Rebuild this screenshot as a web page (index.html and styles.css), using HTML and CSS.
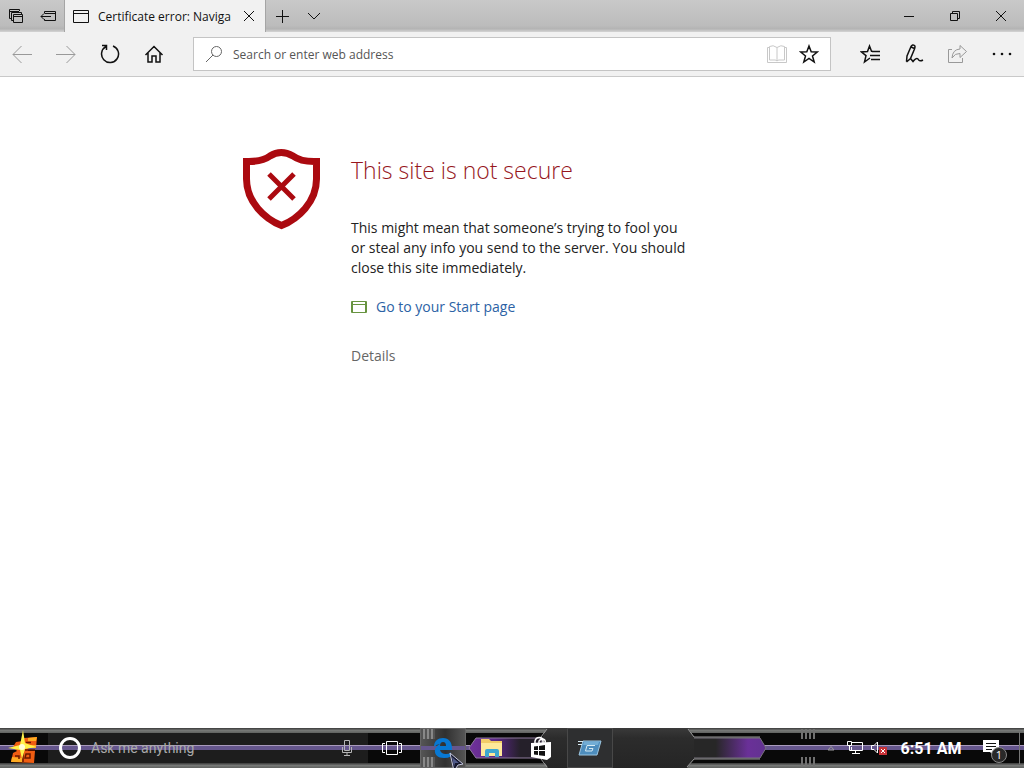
FILE: index.html
```html
<!DOCTYPE html>
<html lang="en">
<head>
	<meta charset="utf-8">
	<title>Certificate error: Navigation blocked</title>
	<link rel="stylesheet" href="styles.css">
</head>
<body>

<header class="tabs">
	<button class="tab-tool" aria-label="Tabs you've set aside">
		<svg width="16" height="16" viewBox="0 0 16 16"><path d="M3 10.500H1.500V1.500H11.500V3M1.500 3.500H11M5 12.500H3.500V4.500H13.500V6M5.500 6.500H14.500V14.500H5.500ZM5.500 8.500H14"/></svg>
	</button>
	<button class="tab-tool" aria-label="Set these tabs aside">
		<svg width="16" height="16" viewBox="0 0 16 16"><path d="M4.500 5V3.500H15.500V12.500H4.500V11M4.500 5.500H15.500M11 8.500H1M4 5.500L1 8.500L4 11.500"/></svg>
	</button>
	<div class="tab">
		<svg width="16" height="14" viewBox="0 0 16 14"><path d="M.5 1.500H15.500V13.500H.5ZM.5 4.500H15.500"/></svg>
		<span class="tab-title">Certificate error: Naviga</span>
		<button class="tab-close" aria-label="Close tab">
			<svg width="10" height="10" viewBox="0 0 10 10"><path d="M0 0L10 10M10 0L0 10"/></svg>
		</button>
	</div>
	<button class="tab-tool" aria-label="New tab">
		<svg width="14" height="14" viewBox="0 0 14 14"><path d="M7.500 1V14M1 7.500H14"/></svg>
	</button>
	<button class="tab-tool" aria-label="Show tab previews">
		<svg width="14" height="8" viewBox="0 0 14 8"><path d="M1 1L7 7L13 1"/></svg>
	</button>
	<div class="window-buttons">
		<button aria-label="Minimize"><svg width="10" height="10" viewBox="0 0 10 10"><path d="M0 5.500H10"/></svg></button>
		<button aria-label="Restore"><svg width="10" height="10" viewBox="0 0 10 10"><path d="M.5 2.500H7.500V9.500H.5ZM2.500 2V.5H9.500V7.500H8"/></svg></button>
		<button aria-label="Close"><svg width="12" height="12" viewBox="0 0 12 12"><path d="M1 1L11 11M11 1L1 11"/></svg></button>
	</div>
</header>

<nav class="toolbar">
	<button class="dim" aria-label="Back"><svg width="20" height="18" viewBox="0 0 20 18"><path d="M20 9.500H1M9.500 1L1 9.500L9.500 18"/></svg></button>
	<button class="dim" aria-label="Forward"><svg width="20" height="18" viewBox="0 0 20 18"><path d="M0 9.500H19M10.500 1L19 9.500L10.500 18"/></svg></button>
	<button aria-label="Refresh"><svg width="20" height="20" viewBox="0 0 20 20"><path class="bold" d="M13 2A8.500 8.500 0 1 1 6 2.500M2 1.500H6.500V6"/></svg></button>
	<button aria-label="Home"><svg width="20" height="20" viewBox="0 0 20 20"><path class="bold" d="M1.500 11L10 2.500L18.500 11M4 9V18H8V12H12V18H16V9"/></svg></button>
	<form class="address">
		<svg width="18" height="18" viewBox="0 0 18 18"><circle cx="10.500" cy="6.500" r="5"/><path d="M7 10L0 17"/></svg>
		<input type="text" aria-label="Address" placeholder="Search or enter web address">
		<button type="button" class="faint" aria-label="Reading view"><svg width="20" height="18" viewBox="0 0 20 18"><path d="M10 2.500Q6 -.5 2.500 1.500V15H8Q9 15 10 16Q11 15 12 15H17.500V1.500Q14 -.5 10 2.500V16M2.500 2.500H.5V17.500H19.500V2.500H17.500"/></svg></button>
		<button type="button" aria-label="Add to favorites"><svg width="20" height="20" viewBox="0 0 20 20"><path class="bold" d="M10 2L12.200 7.700L18.300 8L13.500 11.900L15.200 18L10 14.500L4.800 18L6.500 11.900L1.700 8L7.800 7.700Z"/></svg></button>
	</form>
	<button aria-label="Hub"><svg width="20" height="20" viewBox="0 0 20 20"><path class="bold" d="M12.500 7.200H11.500L9.500 2L7.500 7.500L1.500 8L6 11.600L4.500 18L10 14M10 11.500H20M12 7.500H20M11 15.500H20"/></svg></button>
	<button aria-label="Make a web note"><svg width="20" height="20" viewBox="0 0 20 20"><path class="bold" d="M2.500 17.500L3 12L7 2.500Q8.500 0 10.500 1.500Q11.500 2.500 10.500 5L6.500 14.500L2.500 18M7 3L10.500 4.500M6.500 14.500L9 17.500Q12 13.500 14 15Q15.500 18 19 16"/></svg></button>
	<button class="dim" aria-label="Share"><svg width="20" height="20" viewBox="0 0 20 20"><path d="M4 5.500H.5V18.500H14.500V14M4 14Q4.500 5.500 12 5V1.500L18.500 7.500L12 13.500V9.500Q7 9 4 14Z"/></svg></button>
	<button aria-label="More"><svg width="20" height="20" viewBox="0 0 20 20"><g class="dots"><circle cx="2" cy="10" r="1.300"/><circle cx="10" cy="10" r="1.300"/><circle cx="18" cy="10" r="1.300"/></g></svg></button>
</nav>

<main class="page">
	<div class="warning">
		<svg class="shield" width="78" height="82" viewBox="0 0 78 82">
			<path d="M3.500 13.500Q19 14 27 8Q38 1 50 8Q58 14 73.500 13.500V31C73.500 54 55 71 38.500 77.500C22 71 3.500 54 3.500 31Z"/>
			<path class="cross" d="M26 26L51 51M51 26L26 51"/>
		</svg>
		<div class="message">
			<h1>This site is not secure</h1>
			<p>This might mean that someone’s trying to fool you or steal any info you send to the server. You should close this site immediately.</p>
			<a class="start-page" href="#">
				<svg width="16" height="12" viewBox="0 0 16 12"><path d="M.5.5H15.500V11.500H.5ZM1 3.500H15M1.500 1V11M14.500 1V11"/></svg>
				Go to your Start page
			</a>
			<a class="details" href="#">Details</a>
		</div>
	</div>
</main>

<footer class="taskbar">
	<svg class="wallpaper" viewBox="0 0 1024 40" preserveAspectRatio="none">
		<defs>
			<linearGradient id="edge" x2="0" y2="1">
				<stop offset="0" stop-color="#393939"/>
				<stop offset=".5" stop-color="#767876"/>
				<stop offset="1" stop-color="#606260"/>
			</linearGradient>
			<linearGradient id="left">
				<stop offset="0" stop-color="#71329b"/>
				<stop offset=".35" stop-color="#5c2788"/>
				<stop offset=".7" stop-color="#25202a"/>
			</linearGradient>
			<linearGradient id="right">
				<stop offset=".3" stop-color="#272727"/>
				<stop offset=".75" stop-color="#6a3098"/>
				<stop offset="1" stop-color="#623391"/>
			</linearGradient>
			<linearGradient id="middle" x2="0" y2="1">
				<stop offset="0" stop-color="#3a3a3a"/>
				<stop offset=".25" stop-color="#2c2c2c"/>
				<stop offset="1" stop-color="#252525"/>
			</linearGradient>
		</defs>
		<path fill="#090909" d="M0 0H1024V40H0Z"/>
		<path fill="#1d1d1d" d="M48 4H368V36H48Z"/>
		<path fill="url(#edge)" d="M0 0H1024V5H0Z"/>
		<path fill="url(#edge)" d="M0 35H1024V40H0Z"/>
		<path fill="#65568d" d="M0 17H470V22H0ZM764 17H1024V22H764Z"/>
		<path fill="#a99abc" d="M0 17H470V18H0ZM764 17H1024V18H764Z"/>
		<path fill="url(#left)" stroke="#8e7a9c" d="M469 20L476 10H542V30H476Z"/>
		<path fill="url(#middle)" d="M547 0H688L694 9V31L687 40H548L542 30V10Z"/>
		<path fill="#090909" d="M694 5H764V35H694Z"/>
		<path fill="url(#right)" stroke="#77737c" d="M694 10H760L766 20L760 30H694"/>
		<path fill="none" stroke="#999" d="M688 1L694 9H760M687 39L694 31H760M541 9L547 1M541 31L547 39"/>
		<path stroke="#707070" stroke-width="2" d="M802 1V11M806 1V11M810 1V11M814 1V11M802 29V39M806 29V39M810 29V39M814 29V39"/>
		<path stroke="#777" d="M1019.500 4V36"/>
	</svg>
	<button class="start" aria-label="Start">
		<svg width="32" height="36" viewBox="0 0 32 36">
			<path fill="#ef5d12" d="M8 12L15 11L16 8L29 7L28 18H20V21H27L26 33L3 32L5 23L9 21L5 17Z"/>
			<path fill="#ffac22" d="M20 8L29 7L28 11H20ZM4 27L14 28V32H3ZM19 15H28V18H19Z"/>
			<path fill="none" stroke="#681900" stroke-width="1.500" d="M18 12.500H23M7 26H11V29M18 24H22V28H17ZM15 23V32M17 20H27"/>
			<path fill="#fff24b" d="M15 0L17 13L28 17L17 19L14 29L12 20L0 18L12 15Z"/>
			<circle cx="14" cy="17" r="3" fill="#fffed7"/>
		</svg>
	</button>
	<label class="cortana">
		<svg width="22" height="22" viewBox="0 0 22 22"><circle cx="11" cy="11" r="9.500" fill="none" stroke="#fff" stroke-width="3"/></svg>
		<input type="text" aria-label="Search Windows" placeholder="Ask me anything">
		<svg width="12" height="18" viewBox="0 0 12 18"><path fill="none" stroke="#b5b5b5" d="M3.500 1.500H8.500V11.500H3.500ZM1.500 8V13.500H10.500V8M6 14V16.500M3 16.500H9"/></svg>
	</label>
	<button class="task-view" aria-label="Task view">
		<svg width="20" height="16" viewBox="0 0 20 16"><path fill="none" stroke="#fff" d="M4.500 1.500H15.500V14.500H4.500ZM3 3.500H.5V12.500H3M17 3.500H19.500V12.500H17"/></svg>
	</button>
	<button class="app edge" aria-label="Microsoft Edge">
		<svg width="20" height="22" viewBox="0 0 20 22"><path fill="#0878d3" d="M1 10C1 4 5 1 10 1C16 1 19 5 19 12V13H7Q8 17 13 17Q16 17 18 15.500V19.500Q15 21 11 21C5 21 1 18 2 12Q4 8 7 7Q4 7 1 10ZM7 9H13Q13 5 10 5Q7 5 7 9Z"/></svg>
		<svg class="pointer" width="16" height="20" viewBox="0 0 16 20"><path fill="#15172d" stroke="#c4c6dc" d="M1 1L14 12L9 13L5 19Z"/><path fill="#505a89" d="M3 5L10 11L6 11L5 15Z"/></svg>
	</button>
	<button class="app" aria-label="File Explorer">
		<svg width="22" height="20" viewBox="0 0 22 20"><path fill="#f3cc67" d="M0 1H8L10 3H21V18H0Z"/><path fill="#ffe89a" d="M0 5H21V18H0Z"/><path fill="#3ea7d0" d="M4 19V13Q4 11 6 11H16Q18 11 18 13V19H14V15H8V19Z"/></svg>
	</button>
	<button class="app store" aria-label="Store">
		<svg width="22" height="24" viewBox="0 0 22 24"><path fill="none" stroke="#fff" stroke-width="1.500" d="M5 8V5Q6 1 10 1.500Q13 2 13 5V7M9 7V5Q10 3 13 3Q16 4 15 7"/><path fill="#fff" d="M1 7L21 6V21L17 24L1 21Z"/><path fill="#111" d="M4 10.500L8 10V14H4ZM9 9.900L15 9V14H9ZM4 15H8V19L4 18.500ZM9 15H15V20L9 19.200Z"/></svg>
	</button>
	<button class="app running" aria-label="Run">
		<svg width="24" height="18" viewBox="0 0 24 18"><path fill="#4d8dbd" stroke="#9bc5df" d="M5 2H23L19 16H1Z"/><path fill="#72add5" d="M6 3H21L20 6H5Z"/><path fill="none" stroke="#d5eaf3" d="M17 6.500H9L7.500 12H14L15 9.500H11M0 2.500H5M0 5.500H4"/></svg>
	</button>
	<div class="tray">
		<button class="hidden-icons" aria-label="Show hidden icons"><svg width="8" height="6" viewBox="0 0 8 6"><path fill="none" stroke="#999" d="M1 5L4 1.500L7 5Z"/></svg></button>
		<button aria-label="Network"><svg width="16" height="14" viewBox="0 0 16 14"><path fill="none" stroke="#fff" d="M5 1.500H15.500V9.500H4.500V6M8.500 9.500V12.500M5 12.500H13M.5 .5H4.500V4.500H.5ZM2.500 4.500V9.500H5"/></svg></button>
		<button aria-label="Volume muted"><svg width="16" height="16" viewBox="0 0 16 16"><path fill="none" stroke="#fff" d="M.5 5.500H3L6.500 2V13L3 9.500H.5Z"/><path fill="#c83238" d="M8 7H16V15H8Z"/><path stroke="#fff" d="M10 9L14 13M14 9L10 13"/></svg></button>
		<button class="clock">6:51 AM</button>
		<button class="notifications" aria-label="Notifications">
			<svg width="18" height="18" viewBox="0 0 18 18"><path fill="#fff" d="M1 1H17V13H12V17L8 13H1Z"/><path stroke="#111" d="M4 4.500H14M4 7.500H14M4 10.500H10"/></svg>
			<span class="badge">1</span>
		</button>
	</div>
</footer>

</body>
</html>
```

FILE: styles.css
```css
* {
	box-sizing: border-box;
}

body {
	display: flex;
	flex-direction: column;
	min-height: 100vh;
	margin: 0;

	background: #fff;
	color: #222;
	font-family: "Open Sans", "Noto Sans", sans-serif;
	font-size: 14px;
}

button {
	display: flex;
	align-items: center;
	justify-content: center;
	flex: none;
	padding: 0;
	border: 0;
	background: none;
	color: inherit;
	font: inherit;
}

svg {
	flex: none;
}

input {
	min-width: 0;
	flex: 1;
	padding: 0;
	border: 0;
	outline: 0;
	background: none;
	font: inherit;
}

/* Tab strip */

.tabs {
	display: flex;
	height: 32px;
	background: linear-gradient(#c9c9c9, #bcbcbc 80%, #b4b4b4 90%, #d4d4d4);
}

.tabs svg,
.toolbar svg {
	fill: none;
	stroke: #111;
}

.tab-tool {
	width: 32px;
}

.tab {
	display: flex;
	align-items: center;
	width: 202px;
	padding: 0 8px;
	border: solid #a5a5a5;
	border-width: 0 1px;
	background: #f1f1f1;
}

.tab-title {
	flex: 1;
	padding-left: 9px;
	overflow: hidden;
	color: #111;
	font-size: 12px;
	white-space: nowrap;
}

.tab-close {
	width: 16px;
	height: 32px;
}

.window-buttons {
	display: flex;
	margin-left: auto;
}

.window-buttons button {
	width: 46px;
}

/* Toolbar */

.toolbar {
	display: flex;
	align-items: center;
	height: 45px;
	border-bottom: 1px solid #c9c9c9;
	background: #f1f1f1;
}

.toolbar > button {
	width: 44px;
	height: 44px;
}

.toolbar .bold {
	stroke-width: 1.5;
}

.toolbar .dim svg {
	stroke: #999;
}

.toolbar .faint svg {
	stroke: #c8c8c8;
}

.toolbar .dots {
	fill: #111;
	stroke: none;
}

.address {
	display: flex;
	align-items: center;
	flex: 1;
	height: 34px;
	margin: 0 17px;
	padding: 0 5px 0 12px;
	border: 1px solid #c4c4c4;
	background: #fff;
}

.address > svg {
	stroke: #666;
}

.address input {
	padding-left: 9px;
	font-size: 12px;
}

.address input::placeholder {
	color: #555;
}

.address button {
	width: 32px;
	height: 32px;
}

/* Error page */

.page {
	flex: 1;
	padding: 71px 16px 32px;
}

.warning {
	display: flex;
	gap: 30px;
	max-width: 538px;
	margin: 0 auto;
}

.shield {
	fill: none;
	stroke: #ab0a10;
	stroke-width: 7;
}

.shield .cross {
	stroke-width: 5;
}

.message {
	max-width: 342px;
}

.message h1 {
	margin: 6px 0 32px;
	color: #96161d;
	font-size: 23px;
	font-weight: 300;
	line-height: 32px;
}

.message p {
	margin: 0 0 19px;
	line-height: 20px;
}

.start-page {
	display: flex;
	align-items: center;
	gap: 9px;
	color: #2c62a5;
	line-height: 20px;
	text-decoration: none;
}

.start-page svg {
	fill: none;
	stroke: #689440;
}

.details {
	display: inline-block;
	margin-top: 29px;
	color: #666;
	line-height: 20px;
	text-decoration: none;
}

/* Taskbar */

.taskbar {
	display: flex;
	position: relative;
	height: 40px;
	color: #fff;
}

.wallpaper {
	position: absolute;
	width: 100%;
	height: 100%;
}

.taskbar > :not(.wallpaper) {
	position: relative;
}

.start {
	width: 48px;
}

.cortana {
	display: flex;
	align-items: center;
	width: 320px;
	padding: 0 15px 0 11px;
}

.cortana input {
	padding-left: 10px;
	font-family: Roboto, "Open Sans", sans-serif;
	font-size: 14px;
}

.cortana input::placeholder {
	color: #aaa;
}

.task-view {
	width: 48px;
}

.app {
	width: 49px;
}

.edge {
	width: 46px;
	margin: 0 1px 0 4px;
	border: 1px solid #666;
	background:
		repeating-linear-gradient(90deg, #888 0 2px, #555 2px 4px) 2px 0 / 12px 10px no-repeat,
		repeating-linear-gradient(90deg, #888 0 2px, #555 2px 4px) 2px 100% / 12px 10px no-repeat,
		linear-gradient(#65568d, #65568d) 0 50% / 100% 4px no-repeat,
		linear-gradient(90deg, #555, #303030 55%, #555);
}

.pointer {
	position: absolute;
	right: 0;
	bottom: -5px;
}

.running {
	width: 46px;
	margin-left: 2px;
	border: 1px solid #484848;
	background: #2e2f30;
}

.tray {
	display: flex;
	margin-left: auto;
	padding-right: 13px;
}

.tray button {
	width: 24px;
}

.tray .clock {
	width: 80px;
	font-family: Roboto, "Open Sans", sans-serif;
	font-size: 16px;
	font-weight: bold;
}

.tray .notifications {
	position: relative;
	width: 40px;
}

.badge {
	position: absolute;
	right: 4px;
	bottom: 5px;
	width: 16px;
	border: 1px solid #888;
	border-radius: 50%;
	background: #292929;
	font-size: 11px;
	line-height: 14px;
}
```
